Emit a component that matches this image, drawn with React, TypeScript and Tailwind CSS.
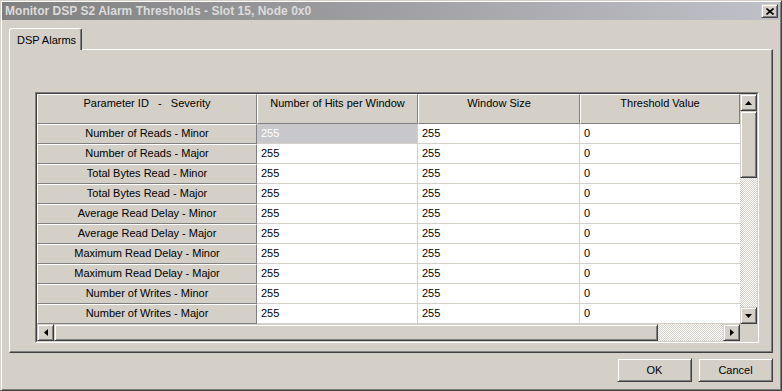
import React from "react";

const ROWS = [
  "Number of Reads - Minor",
  "Number of Reads - Major",
  "Total Bytes Read - Minor",
  "Total Bytes Read - Major",
  "Average Read Delay - Minor",
  "Average Read Delay - Major",
  "Maximum Read Delay - Minor",
  "Maximum Read Delay - Major",
  "Number of Writes - Minor",
  "Number of Writes - Major",
];

const RAISED =
  "border border-t-[#d4d0c8] border-l-[#d4d0c8] border-r-[#404040] border-b-[#404040] shadow-[inset_1px_1px_#fff,inset_-1px_-1px_#808080]";
const CHECKER =
  "bg-[conic-gradient(#d4d0c8_25%,#fff_0_50%,#d4d0c8_0_75%,#fff_0)] bg-[length:2px_2px]";

function Arrow({ dir }: { dir: "up" | "down" | "left" | "right" }) {
  const pts = {
    up: "3.5,0 7,4 0,4",
    down: "0,0 7,0 3.5,4",
    left: "4,0 4,7 0,3.5",
    right: "0,0 4,3.5 0,7",
  }[dir];
  const vertical = dir === "up" || dir === "down";
  return (
    <svg width={vertical ? 7 : 4} height={vertical ? 4 : 7} viewBox={vertical ? "0 0 7 4" : "0 0 4 7"}>
      <polygon points={pts} fill="#000" />
    </svg>
  );
}

function ScrollBtn({ dir }: { dir: "up" | "down" | "left" | "right" }) {
  return (
    <div className={`w-[17px] h-[17px] shrink-0 bg-[#d4d0c8] flex items-center justify-center ${RAISED}`}>
      <Arrow dir={dir} />
    </div>
  );
}

export default function App() {
  return (
    <div className="w-[782px] h-[391px] overflow-hidden bg-[#d4d0c8] p-px border border-t-[#d4d0c8] border-l-[#d4d0c8] border-r-[#404040] border-b-[#404040] shadow-[inset_1px_1px_#fff,inset_-1px_-1px_#808080] font-['Liberation_Sans',Arial,sans-serif] text-[11px] text-black flex flex-col">
      {/* title bar */}
      <div className="h-[18px] shrink-0 flex items-center justify-between pl-[3px] pr-[2px] bg-[linear-gradient(to_right,#808080,#c0c0c8)]">
        <span className="font-bold text-[12px] text-[#dcdcdc] leading-none tracking-[0.03px]">
          Monitor DSP S2 Alarm Thresholds - Slot 15, Node 0x0
        </span>
        <div className={`w-[17px] h-[14px] bg-[#d4d0c8] flex items-center justify-center ${RAISED}`}>
          <svg width="8" height="7" viewBox="0 0 8 7">
            <path d="M0.5 0.5 L7.5 6.5 M7.5 0.5 L0.5 6.5" stroke="#000" strokeWidth="1.6" />
          </svg>
        </div>
      </div>

      <div className="flex-1 px-[7px] pt-[8px] flex flex-col">
        {/* tab */}
        <div className="relative z-10 -mb-px w-[73px] h-[22px] bg-[#d4d0c8] border-t border-l border-white border-r border-r-[#404040] rounded-tl-[3px] rounded-tr-[2px] shadow-[inset_-1px_0_#808080] pl-[7px] pt-[3px]">
          DSP Alarms
        </div>

        {/* panel */}
        <div className="h-[304px] border border-t-white border-l-white border-r-[#404040] border-b-[#404040] shadow-[inset_-1px_-1px_#808080] pl-[25px] pt-[42px]">
          <div className="w-[724px] border border-t-[#808080] border-l-[#808080] border-r-white border-b-white">
            <div className="border border-t-[#404040] border-l-[#404040] border-r-[#d4d0c8] border-b-[#d4d0c8] flex flex-col">
              <div className="flex">
                <div className="w-[703px] grid grid-cols-[220px_161px_162px_160px]">
                  {["Parameter ID   -   Severity", "Number of Hits per Window", "Window Size", "Threshold Value"].map(
                    (h) => (
                      <div
                        key={h}
                        className="h-[30px] bg-[#d4d0c8] border border-white border-r-[#808080] border-b-[#808080] text-center pt-0 whitespace-pre"
                      >
                        {h}
                      </div>
                    )
                  )}
                  {ROWS.map((r, i) => (
                    <React.Fragment key={r}>
                      <div className="h-[20px] bg-[#d4d0c8] border border-white border-r-[#808080] border-b-[#808080] flex items-center justify-center pb-px">
                        {r}
                      </div>
                      <div
                        className={`h-[20px] border-r border-b border-[#d4d0c8] flex items-center pl-[4px] ${
                          i === 0 ? "bg-[#c8c7cc] text-white" : "bg-white"
                        }`}
                      >
                        255
                      </div>
                      <div className="h-[20px] bg-white border-r border-b border-[#d4d0c8] flex items-center pl-[4px]">255</div>
                      <div className="h-[20px] bg-white border-b border-[#d4d0c8] flex items-center pl-[4px]">0</div>
                    </React.Fragment>
                  ))}
                </div>
                {/* vertical scrollbar */}
                <div className={`w-[17px] flex flex-col ${CHECKER}`}>
                  <ScrollBtn dir="up" />
                  <div className={`h-[67px] bg-[#d4d0c8] ${RAISED}`} />
                  <div className="flex-1" />
                  <ScrollBtn dir="down" />
                </div>
              </div>
              {/* horizontal scrollbar */}
              <div className="flex h-[17px]">
                <div className={`w-[703px] flex ${CHECKER}`}>
                  <ScrollBtn dir="left" />
                  <div className={`w-[604px] bg-[#d4d0c8] ${RAISED}`} />
                  <div className="flex-1" />
                  <ScrollBtn dir="right" />
                </div>
                <div className="w-[17px] bg-[#d4d0c8]" />
              </div>
            </div>
          </div>
        </div>

        {/* buttons */}
        <div className="flex justify-end gap-[6px] mt-[5px]">
          {["OK", "Cancel"].map((b) => (
            <div key={b} className={`w-[75px] h-[24px] bg-[#d4d0c8] flex items-center justify-center ${RAISED}`}>
              {b}
            </div>
          ))}
        </div>
      </div>
    </div>
  );
}
